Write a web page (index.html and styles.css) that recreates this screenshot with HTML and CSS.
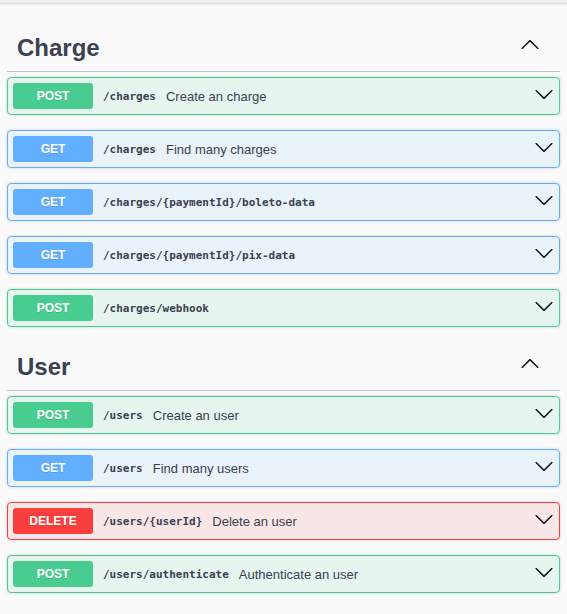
FILE: index.html
```html
<!DOCTYPE html>
<html lang="en">
<head>
<meta charset="utf-8">
<title>API</title>
<link rel="stylesheet" href="styles.css">
</head>
<body>
<div class="topbar"></div>
<main class="wrap">
  <section class="tag-section">
    <h3 class="tag-head">
      <span class="tag-name">Charge</span>
      <svg class="tag-arrow" viewBox="0 0 20 20" width="20" height="20"><path d="M17.418 6.109c.272-.268.709-.268.979 0s.271.701 0 .969l-7.908 7.83c-.27.268-.707.268-.979 0l-7.908-7.83c-.27-.268-.27-.701 0-.969.271-.268.709-.268.979 0L10 13.25l7.418-7.141z"/></svg>
    </h3>
    <div class="opblock post">
      <span class="method">POST</span>
      <span class="path">/charges</span>
      <span class="desc">Create an charge</span>
      <svg class="arrow" viewBox="0 0 20 20" width="20" height="20"><path d="M17.418 6.109c.272-.268.709-.268.979 0s.271.701 0 .969l-7.908 7.83c-.27.268-.707.268-.979 0l-7.908-7.83c-.27-.268-.27-.701 0-.969.271-.268.709-.268.979 0L10 13.25l7.418-7.141z"/></svg>
    </div>
    <div class="opblock get">
      <span class="method">GET</span>
      <span class="path">/charges</span>
      <span class="desc">Find many charges</span>
      <svg class="arrow" viewBox="0 0 20 20" width="20" height="20"><path d="M17.418 6.109c.272-.268.709-.268.979 0s.271.701 0 .969l-7.908 7.83c-.27.268-.707.268-.979 0l-7.908-7.83c-.27-.268-.27-.701 0-.969.271-.268.709-.268.979 0L10 13.25l7.418-7.141z"/></svg>
    </div>
    <div class="opblock get">
      <span class="method">GET</span>
      <span class="path">/charges/{paymentId}/boleto-data</span>
      <svg class="arrow" viewBox="0 0 20 20" width="20" height="20"><path d="M17.418 6.109c.272-.268.709-.268.979 0s.271.701 0 .969l-7.908 7.83c-.27.268-.707.268-.979 0l-7.908-7.83c-.27-.268-.27-.701 0-.969.271-.268.709-.268.979 0L10 13.25l7.418-7.141z"/></svg>
    </div>
    <div class="opblock get">
      <span class="method">GET</span>
      <span class="path">/charges/{paymentId}/pix-data</span>
      <svg class="arrow" viewBox="0 0 20 20" width="20" height="20"><path d="M17.418 6.109c.272-.268.709-.268.979 0s.271.701 0 .969l-7.908 7.83c-.27.268-.707.268-.979 0l-7.908-7.83c-.27-.268-.27-.701 0-.969.271-.268.709-.268.979 0L10 13.25l7.418-7.141z"/></svg>
    </div>
    <div class="opblock post">
      <span class="method">POST</span>
      <span class="path">/charges/webhook</span>
      <svg class="arrow" viewBox="0 0 20 20" width="20" height="20"><path d="M17.418 6.109c.272-.268.709-.268.979 0s.271.701 0 .969l-7.908 7.83c-.27.268-.707.268-.979 0l-7.908-7.83c-.27-.268-.27-.701 0-.969.271-.268.709-.268.979 0L10 13.25l7.418-7.141z"/></svg>
    </div>
  </section>
  <section class="tag-section">
    <h3 class="tag-head">
      <span class="tag-name">User</span>
      <svg class="tag-arrow" viewBox="0 0 20 20" width="20" height="20"><path d="M17.418 6.109c.272-.268.709-.268.979 0s.271.701 0 .969l-7.908 7.83c-.27.268-.707.268-.979 0l-7.908-7.83c-.27-.268-.27-.701 0-.969.271-.268.709-.268.979 0L10 13.25l7.418-7.141z"/></svg>
    </h3>
    <div class="opblock post">
      <span class="method">POST</span>
      <span class="path">/users</span>
      <span class="desc">Create an user</span>
      <svg class="arrow" viewBox="0 0 20 20" width="20" height="20"><path d="M17.418 6.109c.272-.268.709-.268.979 0s.271.701 0 .969l-7.908 7.83c-.27.268-.707.268-.979 0l-7.908-7.83c-.27-.268-.27-.701 0-.969.271-.268.709-.268.979 0L10 13.25l7.418-7.141z"/></svg>
    </div>
    <div class="opblock get">
      <span class="method">GET</span>
      <span class="path">/users</span>
      <span class="desc">Find many users</span>
      <svg class="arrow" viewBox="0 0 20 20" width="20" height="20"><path d="M17.418 6.109c.272-.268.709-.268.979 0s.271.701 0 .969l-7.908 7.83c-.27.268-.707.268-.979 0l-7.908-7.83c-.27-.268-.27-.701 0-.969.271-.268.709-.268.979 0L10 13.25l7.418-7.141z"/></svg>
    </div>
    <div class="opblock delete">
      <span class="method">DELETE</span>
      <span class="path">/users/{userId}</span>
      <span class="desc">Delete an user</span>
      <svg class="arrow" viewBox="0 0 20 20" width="20" height="20"><path d="M17.418 6.109c.272-.268.709-.268.979 0s.271.701 0 .969l-7.908 7.83c-.27.268-.707.268-.979 0l-7.908-7.83c-.27-.268-.27-.701 0-.969.271-.268.709-.268.979 0L10 13.25l7.418-7.141z"/></svg>
    </div>
    <div class="opblock post">
      <span class="method">POST</span>
      <span class="path">/users/authenticate</span>
      <span class="desc">Authenticate an user</span>
      <svg class="arrow" viewBox="0 0 20 20" width="20" height="20"><path d="M17.418 6.109c.272-.268.709-.268.979 0s.271.701 0 .969l-7.908 7.83c-.27.268-.707.268-.979 0l-7.908-7.83c-.27-.268-.27-.701 0-.969.271-.268.709-.268.979 0L10 13.25l7.418-7.141z"/></svg>
    </div>
  </section>
</main>
</body>
</html>
```
FILE: styles.css
```css
html, body {
  margin: 0;
  padding: 0;
  background: #fafafa;
}

body {
  font-family: "Liberation Sans", Arial, sans-serif;
  color: #3b4151;
}

.topbar {
  height: 3px;
  background: #eeeeee;
  border-bottom: 1px solid #dedede;
  box-shadow: 0 1px 2px rgba(0, 0, 0, 0.06);
}

.wrap {
  padding: 19px 7px 0;
}

.tag-section {
  display: flex;
  flex-direction: column;
}

.tag-head {
  margin: 0 0 5px;
  height: 48px;
  padding: 0 20px 0 10px;
  display: flex;
  align-items: center;
  border-bottom: 1px solid rgba(59, 65, 81, 0.3);
}

.tag-name {
  font-size: 24px;
  font-weight: 700;
  color: #3b4151;
  padding-top: 1px;
}

.tag-arrow {
  margin-left: auto;
  margin-bottom: 4px;
  transform: rotate(180deg);
  fill: #111;
}

.opblock {
  display: flex;
  align-items: center;
  height: 26px;
  padding: 5px;
  margin: 0 0 15px;
  border: 1px solid;
  border-radius: 4px;
  box-shadow: 0 0 3px rgba(0, 0, 0, 0.19);
}

.opblock.post {
  background: rgba(73, 204, 144, 0.1);
  border-color: #49cc90;
}

.opblock.get {
  background: rgba(97, 175, 254, 0.1);
  border-color: #61affe;
}

.opblock.delete {
  background: rgba(249, 62, 62, 0.1);
  border-color: #f93e3e;
}

.method {
  width: 80px;
  height: 26px;
  flex: none;
  display: flex;
  align-items: center;
  justify-content: center;
  border-radius: 3px;
  font-size: 12px;
  font-weight: 700;
  color: #fff;
  text-shadow: 0 1px 0 rgba(0, 0, 0, 0.1);
}

.post .method { background: #49cc90; }
.get .method { background: #61affe; }
.delete .method { background: #f93e3e; }

.path {
  padding: 0 10px;
  font-family: "DejaVu Sans Mono", monospace;
  font-size: 11px;
  font-weight: 700;
  color: #3b4151;
}

.desc {
  font-size: 13px;
  color: #3b4151;
}

.arrow {
  margin-left: auto;
  margin-bottom: 4px;
  flex: none;
  fill: #111;
}
```
